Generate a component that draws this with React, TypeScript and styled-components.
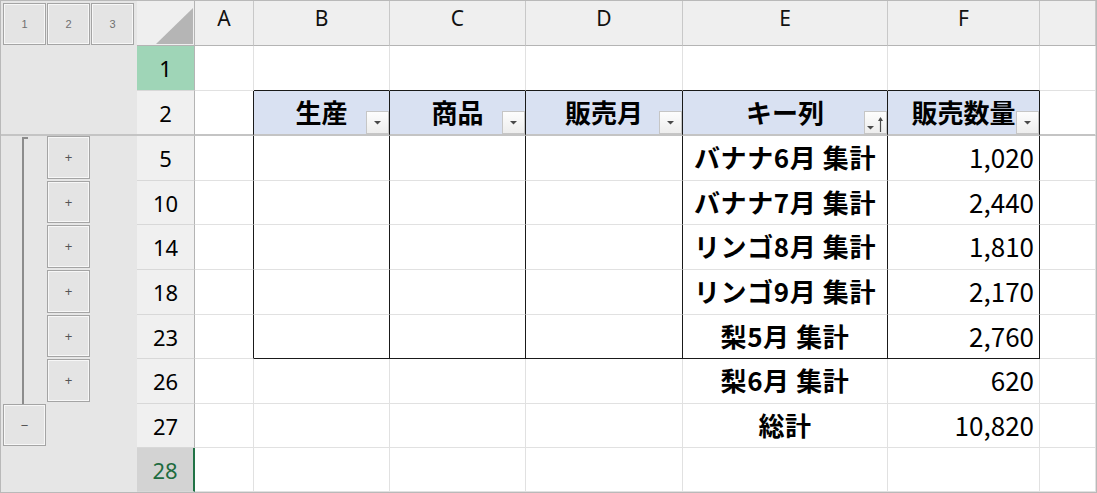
import React from 'react';
import styled, { createGlobalStyle } from 'styled-components';

const Global = createGlobalStyle`
  html, body { margin: 0; padding: 0; background: #fff; }
  body { font-family: "Noto Sans CJK JP", "Noto Sans", sans-serif; }
  * { box-sizing: border-box; }
`;

const GRID = '#e1e1e1';
const DARK = '#1a1a1a';
const MARK = '#c4c4c4';

const Sheet = styled.div`
  width: 1097px;
  height: 493px;
  border: 1px solid #b9b9b9;
  display: grid;
  grid-template-columns: 136px 58px 59px 136px 136px 157px 205px 152px 56px;
  grid-template-rows: 45px 45px 45px 45px 44px 45px 45px 44px 45px 44px 44px;
  overflow: hidden;
  background: #fff;
`;

const OutlineTop = styled.div`
  background: #e6e6e6;
  display: flex;
  gap: 1px;
  padding: 2px 0 0 2px;
`;

const LevelButton = styled.div`
  width: 43px;
  height: 42px;
  border: 1px solid #a4a4a4;
  box-shadow: inset 0 0 0 1px #f7f7f7;
  background: #e4e4e4;
  display: flex;
  align-items: center;
  justify-content: center;
  font-family: "Liberation Sans", "Noto Sans", sans-serif;
  font-size: 11px;
  color: #707070;
`;

const OutlineCell = styled.div<{ $mark?: boolean }>`
  background: #e6e6e6;
  display: grid;
  grid-template-columns: 43px 43px 43px;
  column-gap: 1px;
  padding-left: 2px;
  border-bottom: ${(p) => (p.$mark ? `2px solid ${MARK}` : 'none')};
`;

const Bracket = styled.div<{ $first?: boolean }>`
  grid-column: 1;
  margin-left: 19px;
  width: 6px;
  margin-top: ${(p) => (p.$first ? '1px' : '0')};
  border-left: 2px solid #8c8c8c;
  border-top: ${(p) => (p.$first ? '2px solid #8c8c8c' : 'none')};
`;

const OutlineButton = styled.div<{ $level: number }>`
  grid-column: ${(p) => p.$level};
  grid-row: 1;
  margin-bottom: 2px;
  border: 1px solid #a4a4a4;
  box-shadow: inset 0 0 0 1px #f7f7f7;
  background: #e4e4e4;
  display: flex;
  align-items: center;
  justify-content: center;
  font-family: "Liberation Sans", "Noto Sans", sans-serif;
  font-size: 13px;
  color: #555;
`;

const Corner = styled.div`
  background: #efefef;
  border-right: 1px solid #b4b4b4;
  border-bottom: 1px solid #b4b4b4;
  display: flex;
  align-items: flex-end;
  justify-content: flex-end;
  padding: 0 1px 1px 0;
`;

const ColHeader = styled.div`
  background: #efefef;
  border-right: 1px solid #c8c8c8;
  border-bottom: 1px solid #b4b4b4;
  display: flex;
  align-items: center;
  justify-content: center;
  padding-bottom: 10px;
  font-family: "Noto Sans", sans-serif;
  font-size: 21px;
  color: #111;
`;

type RowState = 'normal' | 'selected' | 'active';

const RowHeader = styled.div<{ $state: RowState; $mark?: boolean }>`
  background: ${(p) =>
    p.$state === 'selected' ? '#9fd5b7' : p.$state === 'active' ? '#d3d3d3' : '#f0f0f0'};
  color: ${(p) => (p.$state === 'active' ? '#1e6b40' : '#000')};
  border-right: ${(p) => (p.$state === 'active' ? '2px solid #217346' : '1px solid #b4b4b4')};
  border-bottom: ${(p) => (p.$mark ? `2px solid ${MARK}` : '1px solid #d8d8d8')};
  display: flex;
  align-items: center;
  justify-content: center;
  font-family: "Noto Sans", sans-serif;
  font-size: 22px;
`;

type Edge = 'grid' | 'dark' | 'mark';

const edge = (e: Edge) =>
  e === 'dark' ? `1px solid ${DARK}` : e === 'mark' ? `2px solid ${MARK}` : `1px solid ${GRID}`;

const Cell = styled.div<{
  $right: Edge;
  $bottom: Edge;
  $head?: boolean;
  $align?: 'center' | 'right';
  $bold?: boolean;
}>`
  position: relative;
  background: ${(p) => (p.$head ? '#d9e1f2' : '#fff')};
  border-right: ${(p) => edge(p.$right)};
  border-bottom: ${(p) => edge(p.$bottom)};
  display: flex;
  align-items: center;
  justify-content: ${(p) => (p.$align === 'right' ? 'flex-end' : 'center')};
  padding: 0 5px 3px;
  font-size: 26px;
  font-weight: ${(p) => (p.$bold ? 700 : 400)};
  letter-spacing: ${(p) => (p.$bold && !p.$head ? '0.6px' : '0')};
  color: #000;
  white-space: nowrap;
`;

const FilterBtn = styled.span`
  position: absolute;
  right: 0;
  bottom: 0;
  width: 23px;
  height: 23px;
  border: 1px solid #c6c6c6;
  background: linear-gradient(#fdfdfd, #ededed);
  display: flex;
`;

function FilterButton({ sorted }: { sorted?: boolean }) {
  return (
    <FilterBtn>
      <svg width="21" height="21" viewBox="0 0 21 21">
        {sorted ? (
          <>
            <polygon points="2,14 9,14 5.5,17.5" fill="#4a4a4a" />
            <path d="M15.5 6 V20" stroke="#4a4a4a" strokeWidth="1.2" />
            <polygon points="13,9 18,9 15.5,5" fill="#4a4a4a" />
          </>
        ) : (
          <polygon points="7,9 14,9 10.5,12.5" fill="#4a4a4a" />
        )}
      </svg>
    </FilterBtn>
  );
}

type Row = {
  n: string;
  state?: RowState;
  kind: 'plain' | 'head' | 'body';
  e?: string;
  f?: string;
  outline?: 'none' | 'plus' | 'minus';
  first?: boolean;
};

const rows: Row[] = [
  { n: '1', state: 'selected', kind: 'plain', outline: 'none' },
  { n: '2', kind: 'head', outline: 'none' },
  { n: '5', kind: 'body', e: 'バナナ6月 集計', f: '1,020', outline: 'plus', first: true },
  { n: '10', kind: 'body', e: 'バナナ7月 集計', f: '2,440', outline: 'plus' },
  { n: '14', kind: 'body', e: 'リンゴ8月 集計', f: '1,810', outline: 'plus' },
  { n: '18', kind: 'body', e: 'リンゴ9月 集計', f: '2,170', outline: 'plus' },
  { n: '23', kind: 'body', e: '梨5月 集計', f: '2,760', outline: 'plus' },
  { n: '26', kind: 'plain', e: '梨6月 集計', f: '620', outline: 'plus' },
  { n: '27', kind: 'plain', e: '総計', f: '10,820', outline: 'minus' },
  { n: '28', state: 'active', kind: 'plain', outline: 'none' },
];

const letters = ['A', 'B', 'C', 'D', 'E', 'F', ''];
const headers = ['生産', '商品', '販売月', 'キー列', '販売数量'];

export default function App() {
  return (
    <>
      <Global />
      <Sheet>
        <OutlineTop>
          <LevelButton>1</LevelButton>
          <LevelButton>2</LevelButton>
          <LevelButton>3</LevelButton>
        </OutlineTop>
        <Corner>
          <svg width="37" height="36" viewBox="0 0 37 36">
            <polygon points="0,36 37,36 37,0" fill="#b5b5b5" />
          </svg>
        </Corner>
        {letters.map((l, i) => (
          <ColHeader key={i}>{l}</ColHeader>
        ))}

        {rows.map((r, ri) => {
          const inTable = r.kind === 'head' || r.kind === 'body';
          const mark = r.kind === 'head';
          const lastBody = r.n === '23';
          return (
            <React.Fragment key={r.n}>
              <OutlineCell $mark={mark}>
                {r.outline === 'plus' && <Bracket $first={r.first} />}
                {r.outline === 'plus' && <OutlineButton $level={2}>+</OutlineButton>}
                {r.outline === 'minus' && <OutlineButton $level={1}>−</OutlineButton>}
              </OutlineCell>
              <RowHeader $state={r.state ?? 'normal'} $mark={mark}>
                {r.n}
              </RowHeader>
              {letters.map((_, ci) => {
                const inCols = ci >= 1 && ci <= 5;
                const right: Edge = inTable && ci <= 5 ? 'dark' : 'grid';
                let bottom: Edge = 'grid';
                if (mark) bottom = 'mark';
                else if (ri === 0 && inCols) bottom = 'dark';
                else if (lastBody && inCols) bottom = 'dark';
                const isHead = r.kind === 'head' && inCols;
                let content: React.ReactNode = null;
                let align: 'center' | 'right' = 'center';
                let bold = false;
                if (isHead) {
                  content = (
                    <>
                      {headers[ci - 1]}
                      <FilterButton sorted={ci === 4} />
                    </>
                  );
                  bold = true;
                } else if (ci === 4 && r.e) {
                  content = r.e;
                  bold = true;
                } else if (ci === 5 && r.f) {
                  content = r.f;
                  align = 'right';
                }
                return (
                  <Cell
                    key={ci}
                    $right={right}
                    $bottom={bottom}
                    $head={isHead}
                    $align={align}
                    $bold={bold}
                  >
                    {content}
                  </Cell>
                );
              })}
            </React.Fragment>
          );
        })}
      </Sheet>
    </>
  );
}
